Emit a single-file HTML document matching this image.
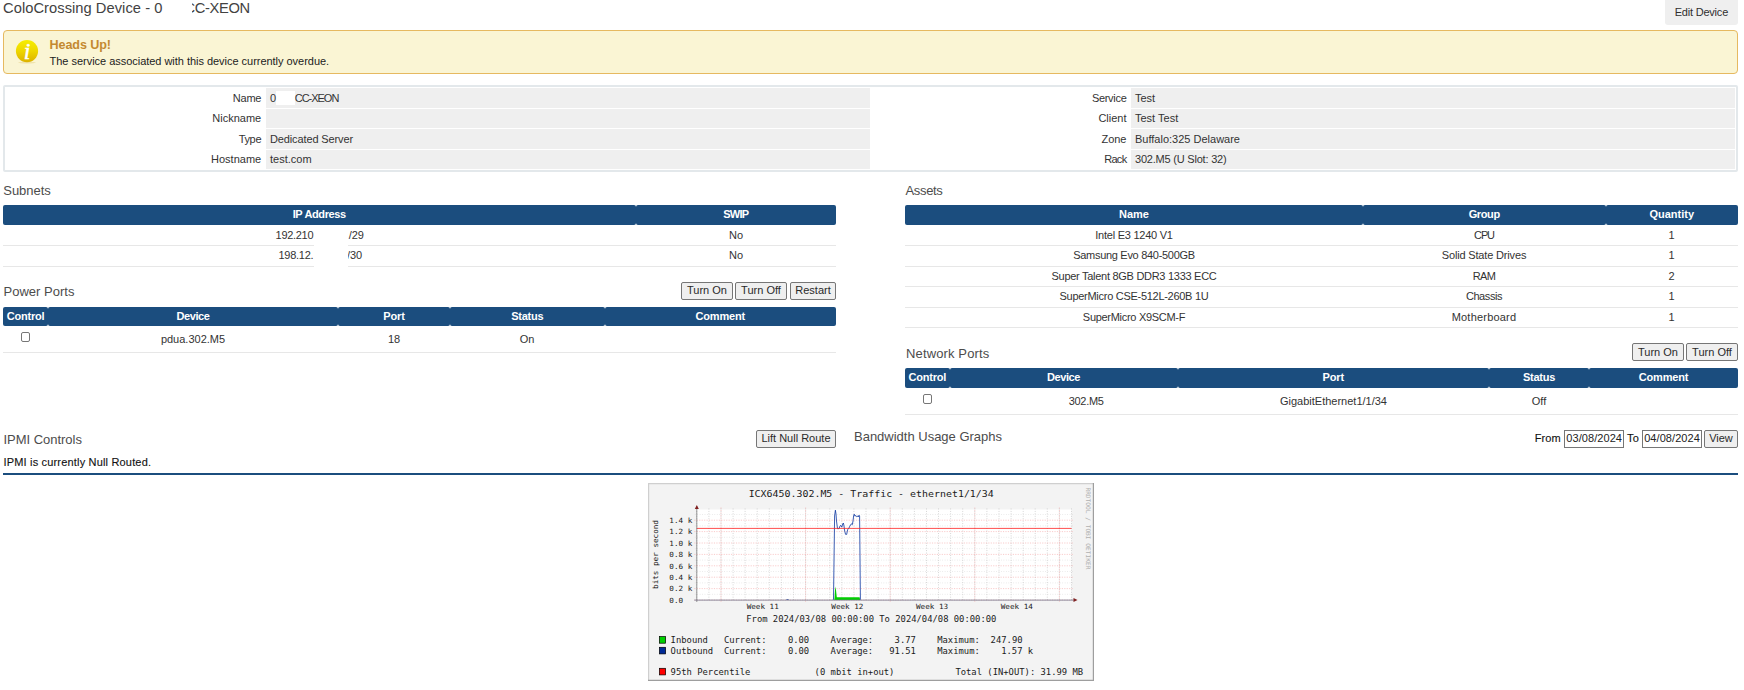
<!DOCTYPE html>
<html><head><meta charset="utf-8"><title>ColoCrossing Device</title>
<style>
html,body{margin:0;padding:0;background:#fff;}
body{width:1744px;height:690px;position:relative;overflow:hidden;font-family:"Liberation Sans",sans-serif;font-size:11px;color:#333;}
.a{position:absolute;white-space:nowrap;line-height:1;z-index:2;}
.bx{position:absolute;box-sizing:content-box;}
.th{position:absolute;background:#1b4d7e;border-radius:2px;}
.ln{position:absolute;height:1px;background:#e7e7e7;}
.gc{position:absolute;background:#efefef;}
.btn{position:absolute;box-sizing:border-box;border:1px solid #767676;background:#efefef;border-radius:2px;}
.cb{position:absolute;width:7.1px;height:7.3px;border:1px solid #767676;border-radius:2px;background:#fff;}
.inp{position:absolute;box-sizing:border-box;border:1px solid #767676;background:#fff;}
.wh{position:absolute;background:#fff;}
</style></head><body>
<div class="wh" style="left:166px;top:0;width:25.5px;height:18px;z-index:5"></div>
<div class="bx" style="left:1665px;top:0;width:73px;height:25px;background:#efefef;border-radius:0 0 3px 3px;"></div>
<div class="bx" style="left:3px;top:30px;width:1733px;height:42px;background:#faf5d4;border:1px solid #e6b960;border-radius:4px;"></div>
<svg class="bx" style="left:14px;top:38px;" width="26" height="28" viewBox="14 38 26 28">
<defs><linearGradient id="ig" x1="0" y1="0" x2="0" y2="1"><stop offset="0" stop-color="#f6ee00"/><stop offset="0.5" stop-color="#eed600"/><stop offset="1" stop-color="#ddb200"/></linearGradient></defs>
<ellipse cx="27" cy="62.6" rx="9" ry="0.9" fill="#e6d48a" opacity="0.55"/>
<circle cx="27" cy="51.1" r="11.1" fill="url(#ig)"/>
<text x="26.9" y="59" text-anchor="middle" font-family="Liberation Serif, serif" font-style="italic" font-size="23.5" fill="#fff" stroke="#fff" stroke-width="0.55">i</text>
</svg>
<div class="bx" style="left:3px;top:85px;width:1731px;height:82.6px;border:2px solid #e3e8eb;border-radius:2px;"></div>
<div class="gc" style="left:266px;top:88px;width:604px;height:19.5px;"></div>
<div class="gc" style="left:1131px;top:88px;width:604px;height:19.5px;"></div>
<div class="gc" style="left:266px;top:108.5px;width:604px;height:19.5px;"></div>
<div class="gc" style="left:1131px;top:108.5px;width:604px;height:19.5px;"></div>
<div class="gc" style="left:266px;top:129px;width:604px;height:19.5px;"></div>
<div class="gc" style="left:1131px;top:129px;width:604px;height:19.5px;"></div>
<div class="gc" style="left:266px;top:149.5px;width:604px;height:19.5px;"></div>
<div class="gc" style="left:1131px;top:149.5px;width:604px;height:19.5px;"></div>
<div class="wh" style="left:276px;top:91px;width:19px;height:14px;"></div>
<div class="th" style="left:3px;top:205px;width:632.5px;height:20px;"></div>
<div class="th" style="left:635.5px;top:205px;width:200.5px;height:20px;"></div>
<div class="ln" style="left:3px;top:245px;width:833px;"></div>
<div class="ln" style="left:3px;top:266px;width:833px;"></div>
<div class="wh" style="left:313.5px;top:226px;width:34.5px;height:42px;z-index:5"></div>
<div class="btn" style="left:681px;top:282px;width:52px;height:18px;"></div>
<div class="btn" style="left:735px;top:282px;width:52px;height:18px;"></div>
<div class="btn" style="left:790px;top:282px;width:46px;height:18px;"></div>
<div class="th" style="left:3px;top:307px;width:45px;height:19px;"></div>
<div class="th" style="left:48px;top:307px;width:290px;height:19px;"></div>
<div class="th" style="left:338px;top:307px;width:112px;height:19px;"></div>
<div class="th" style="left:450px;top:307px;width:154.5px;height:19px;"></div>
<div class="th" style="left:604.5px;top:307px;width:231.5px;height:19px;"></div>
<div class="cb" style="left:21px;top:332.3px;"></div>
<div class="ln" style="left:3px;top:352px;width:833px;"></div>
<div class="th" style="left:905px;top:205px;width:458px;height:20px;"></div>
<div class="th" style="left:1363px;top:205px;width:242.5px;height:20px;"></div>
<div class="th" style="left:1605.5px;top:205px;width:132.5px;height:20px;"></div>
<div class="ln" style="left:905px;top:245px;width:833px;"></div>
<div class="ln" style="left:905px;top:266px;width:833px;"></div>
<div class="ln" style="left:905px;top:286px;width:833px;"></div>
<div class="ln" style="left:905px;top:307px;width:833px;"></div>
<div class="ln" style="left:905px;top:327px;width:833px;"></div>
<div class="btn" style="left:1632px;top:343.3px;width:52px;height:18.19999999999999px;"></div>
<div class="btn" style="left:1686px;top:343.3px;width:52px;height:18.19999999999999px;"></div>
<div class="th" style="left:905px;top:368px;width:44.5px;height:20px;"></div>
<div class="th" style="left:949.5px;top:368px;width:228.0px;height:20px;"></div>
<div class="th" style="left:1177.5px;top:368px;width:311.5px;height:20px;"></div>
<div class="th" style="left:1489px;top:368px;width:100px;height:20px;"></div>
<div class="th" style="left:1589px;top:368px;width:149px;height:20px;"></div>
<div class="cb" style="left:923px;top:394.4px;"></div>
<div class="ln" style="left:905px;top:414px;width:833px;"></div>
<div class="btn" style="left:756px;top:430.3px;width:80px;height:17.30000000000001px;"></div>
<div class="inp" style="left:1564px;top:430.3px;width:60px;height:17.5px;"></div>
<div class="inp" style="left:1642px;top:430.3px;width:60px;height:17.5px;"></div>
<div class="btn" style="left:1704px;top:430.3px;width:34px;height:17.30000000000001px;"></div>
<div class="bx" style="left:3px;top:473px;width:1735px;height:2px;background:#1b4d7e;"></div>
<div class="a" style="left:3.10px;top:1.00px;font-size:14.7px;color:#424242;letter-spacing:0.041px;">ColoCrossing Device - 0</div>
<div class="a" style="left:184.40px;top:1.00px;font-size:14.7px;color:#424242;letter-spacing:-0.319px;">CC-XEON</div>
<div class="a" style="left:1674.75px;top:7.00px;font-size:11px;color:#2f2f2f;letter-spacing:-0.213px;">Edit Device</div>
<div class="a" style="left:49.60px;top:39.00px;font-size:12.6px;color:#c4892f;font-weight:bold;letter-spacing:-0.120px;">Heads Up!</div>
<div class="a" style="left:49.60px;top:56.00px;font-size:11px;color:#1c1c1c;letter-spacing:-0.030px;">The service associated with this device currently overdue.</div>
<div class="a" style="left:232.80px;top:93.00px;font-size:11px;color:#333;letter-spacing:-0.236px;">Name</div>
<div class="a" style="left:270.00px;top:93.00px;font-size:11px;color:#333;">0</div>
<div class="a" style="left:1091.90px;top:93.00px;font-size:11px;color:#333;letter-spacing:-0.298px;">Service</div>
<div class="a" style="left:1135.00px;top:93.00px;font-size:11px;color:#333;">Test</div>
<div class="a" style="left:212.29px;top:113.00px;font-size:11px;color:#333;">Nickname</div>
<div class="a" style="left:1098.38px;top:113.00px;font-size:11px;color:#333;">Client</div>
<div class="a" style="left:1135.00px;top:113.00px;font-size:11px;color:#333;">Test Test</div>
<div class="a" style="left:238.70px;top:134.00px;font-size:11px;color:#333;letter-spacing:-0.340px;">Type</div>
<div class="a" style="left:270.00px;top:134.00px;font-size:11px;color:#333;letter-spacing:-0.125px;">Dedicated Server</div>
<div class="a" style="left:1101.42px;top:134.00px;font-size:11px;color:#333;">Zone</div>
<div class="a" style="left:1135.00px;top:134.00px;font-size:11px;color:#333;">Buffalo:325 Delaware</div>
<div class="a" style="left:211.06px;top:154.00px;font-size:11px;color:#333;">Hostname</div>
<div class="a" style="left:270.00px;top:154.00px;font-size:11px;color:#333;">test.com</div>
<div class="a" style="left:1104.20px;top:154.00px;font-size:11px;color:#333;letter-spacing:-0.691px;">Rack</div>
<div class="a" style="left:1135.00px;top:154.00px;font-size:11px;color:#333;letter-spacing:-0.209px;">302.M5 (U Slot: 32)</div>
<div class="a" style="left:294.80px;top:93.00px;font-size:11px;color:#333;letter-spacing:-1.033px;">CC-XEON</div>
<div class="a" style="left:3.30px;top:184.00px;font-size:13px;color:#4c4c4c;letter-spacing:-0.043px;">Subnets</div>
<div class="a" style="left:292.70px;top:209.00px;font-size:11px;color:#fff;font-weight:bold;letter-spacing:-0.376px;">IP Address</div>
<div class="a" style="left:723.15px;top:209.00px;font-size:11px;color:#fff;font-weight:bold;letter-spacing:-0.731px;">SWIP</div>
<div class="a" style="left:275.60px;top:230.00px;font-size:11px;color:#333;letter-spacing:-0.309px;">192.210</div>
<div class="a" style="left:348.70px;top:230.00px;font-size:11px;color:#333;">/29</div>
<div class="a" style="left:278.50px;top:250.00px;font-size:11px;color:#333;letter-spacing:-0.272px;">198.12.</div>
<div class="a" style="left:346.90px;top:250.00px;font-size:11px;color:#333;">/30</div>
<div class="a" style="left:728.97px;top:230.00px;font-size:11px;color:#333;">No</div>
<div class="a" style="left:728.97px;top:250.00px;font-size:11px;color:#333;">No</div>
<div class="a" style="left:3.50px;top:285.00px;font-size:13px;color:#4c4c4c;letter-spacing:0.017px;">Power Ports</div>
<div class="a" style="left:687.02px;top:285.00px;font-size:11px;color:#2a2a2a;">Turn On</div>
<div class="a" style="left:741.12px;top:285.00px;font-size:11px;color:#2a2a2a;">Turn Off</div>
<div class="a" style="left:795.27px;top:285.00px;font-size:11px;color:#2a2a2a;">Restart</div>
<div class="a" style="left:6.65px;top:311.00px;font-size:11px;color:#fff;font-weight:bold;letter-spacing:-0.201px;">Control</div>
<div class="a" style="left:176.50px;top:311.00px;font-size:11px;color:#fff;font-weight:bold;letter-spacing:-0.414px;">Device</div>
<div class="a" style="left:383.30px;top:311.00px;font-size:11px;color:#fff;font-weight:bold;letter-spacing:-0.150px;">Port</div>
<div class="a" style="left:511.20px;top:311.00px;font-size:11px;color:#fff;font-weight:bold;letter-spacing:-0.254px;">Status</div>
<div class="a" style="left:695.40px;top:311.00px;font-size:11px;color:#fff;font-weight:bold;letter-spacing:-0.148px;">Comment</div>
<div class="a" style="left:160.89px;top:334.00px;font-size:11px;color:#333;">pdua.302.M5</div>
<div class="a" style="left:387.88px;top:334.00px;font-size:11px;color:#333;">18</div>
<div class="a" style="left:519.66px;top:334.00px;font-size:11px;color:#333;">On</div>
<div class="a" style="left:905.50px;top:184.00px;font-size:13px;color:#4c4c4c;letter-spacing:-0.336px;">Assets</div>
<div class="a" style="left:1119.00px;top:209.00px;font-size:11px;color:#fff;font-weight:bold;letter-spacing:0.008px;">Name</div>
<div class="a" style="left:1468.65px;top:209.00px;font-size:11px;color:#fff;font-weight:bold;letter-spacing:-0.360px;">Group</div>
<div class="a" style="left:1649.45px;top:209.00px;font-size:11px;color:#fff;font-weight:bold;letter-spacing:-0.003px;">Quantity</div>
<div class="a" style="left:1095.32px;top:230.00px;font-size:11px;color:#333;letter-spacing:-0.249px;">Intel E3 1240 V1</div>
<div class="a" style="left:1474.05px;top:230.00px;font-size:11px;color:#333;letter-spacing:-1.111px;">CPU</div>
<div class="a" style="left:1668.44px;top:230.00px;font-size:11px;color:#333;">1</div>
<div class="a" style="left:1073.23px;top:250.00px;font-size:11px;color:#333;letter-spacing:-0.298px;">Samsung Evo 840-500GB</div>
<div class="a" style="left:1441.75px;top:250.00px;font-size:11px;color:#333;letter-spacing:-0.163px;">Solid State Drives</div>
<div class="a" style="left:1668.44px;top:250.00px;font-size:11px;color:#333;">1</div>
<div class="a" style="left:1051.52px;top:271.00px;font-size:11px;color:#333;letter-spacing:-0.283px;">Super Talent 8GB DDR3 1333 ECC</div>
<div class="a" style="left:1472.80px;top:271.00px;font-size:11px;color:#333;letter-spacing:-0.684px;">RAM</div>
<div class="a" style="left:1668.44px;top:271.00px;font-size:11px;color:#333;">2</div>
<div class="a" style="left:1059.57px;top:291.00px;font-size:11px;color:#333;letter-spacing:-0.284px;">SuperMicro CSE-512L-260B 1U</div>
<div class="a" style="left:1465.90px;top:291.00px;font-size:11px;color:#333;letter-spacing:-0.418px;">Chassis</div>
<div class="a" style="left:1668.44px;top:291.00px;font-size:11px;color:#333;">1</div>
<div class="a" style="left:1082.85px;top:312.00px;font-size:11px;color:#333;letter-spacing:-0.293px;">SuperMicro X9SCM-F</div>
<div class="a" style="left:1451.70px;top:312.00px;font-size:11px;color:#333;letter-spacing:0.202px;">Motherboard</div>
<div class="a" style="left:1668.44px;top:312.00px;font-size:11px;color:#333;">1</div>
<div class="a" style="left:906.00px;top:347.00px;font-size:13px;color:#4c4c4c;letter-spacing:0.135px;">Network Ports</div>
<div class="a" style="left:1638.02px;top:347.00px;font-size:11px;color:#2a2a2a;">Turn On</div>
<div class="a" style="left:1692.12px;top:347.00px;font-size:11px;color:#2a2a2a;">Turn Off</div>
<div class="a" style="left:908.40px;top:372.00px;font-size:11px;color:#fff;font-weight:bold;letter-spacing:-0.201px;">Control</div>
<div class="a" style="left:1047.00px;top:372.00px;font-size:11px;color:#fff;font-weight:bold;letter-spacing:-0.414px;">Device</div>
<div class="a" style="left:1322.55px;top:372.00px;font-size:11px;color:#fff;font-weight:bold;letter-spacing:-0.150px;">Port</div>
<div class="a" style="left:1522.95px;top:372.00px;font-size:11px;color:#fff;font-weight:bold;letter-spacing:-0.254px;">Status</div>
<div class="a" style="left:1638.65px;top:372.00px;font-size:11px;color:#fff;font-weight:bold;letter-spacing:-0.148px;">Comment</div>
<div class="a" style="left:1068.70px;top:396.00px;font-size:11px;color:#333;letter-spacing:-0.284px;">302.M5</div>
<div class="a" style="left:1279.98px;top:396.00px;font-size:11px;color:#333;">GigabitEthernet1/1/34</div>
<div class="a" style="left:1531.76px;top:396.00px;font-size:11px;color:#333;">Off</div>
<div class="a" style="left:3.50px;top:433.00px;font-size:13px;color:#4c4c4c;letter-spacing:-0.027px;">IPMI Controls</div>
<div class="a" style="left:761.45px;top:433.00px;font-size:11px;color:#2a2a2a;">Lift Null Route</div>
<div class="a" style="left:3.50px;top:457.00px;font-size:11px;color:#111;letter-spacing:0.175px;-webkit-text-stroke:0.12px #151515;">IPMI is currently Null Routed.</div>
<div class="a" style="left:854.00px;top:430.00px;font-size:13px;color:#4c4c4c;letter-spacing:-0.007px;">Bandwidth Usage Graphs</div>
<div class="a" style="left:1534.75px;top:433.00px;font-size:11px;color:#111;letter-spacing:0.082px;-webkit-text-stroke:0.12px #151515;">From</div>
<div class="a" style="left:1566.30px;top:433.00px;font-size:11px;color:#222;letter-spacing:0.064px;">03/08/2024</div>
<div class="a" style="left:1627.00px;top:433.00px;font-size:11px;color:#111;letter-spacing:0.138px;-webkit-text-stroke:0.12px #151515;">To</div>
<div class="a" style="left:1644.20px;top:433.00px;font-size:11px;color:#222;letter-spacing:0.064px;">04/08/2024</div>
<div class="a" style="left:1709.17px;top:433.00px;font-size:11px;color:#2a2a2a;">View</div>
<svg class="bx" style="left:648px;top:483px;z-index:1" width="446" height="198" viewBox="648 483 446 198" font-family="DejaVu Sans Mono, Liberation Mono, monospace">
<rect x="648" y="483" width="446" height="198" fill="#f3f3f3"/>
<path d="M648 681 V483 H1094" fill="none" stroke="#cfcfcf" stroke-width="2.4"/>
<path d="M1094 483 V681 H648" fill="none" stroke="#9e9e9e" stroke-width="2.4"/>
<rect x="696.8" y="509.5" width="374.70000000000005" height="90.5" fill="#fff"/>
<path d="M696.8 508.5 V601.0 M708.9 508.5 V601.0 M721.0 508.5 V601.0 M733.1 508.5 V601.0 M745.1 508.5 V601.0 M757.2 508.5 V601.0 M769.3 508.5 V601.0 M781.4 508.5 V601.0 M793.5 508.5 V601.0 M805.6 508.5 V601.0 M817.7 508.5 V601.0 M829.8 508.5 V601.0 M841.8 508.5 V601.0 M853.9 508.5 V601.0 M866.0 508.5 V601.0 M878.1 508.5 V601.0 M890.2 508.5 V601.0 M902.3 508.5 V601.0 M914.4 508.5 V601.0 M926.5 508.5 V601.0 M938.5 508.5 V601.0 M950.6 508.5 V601.0 M962.7 508.5 V601.0 M974.8 508.5 V601.0 M986.9 508.5 V601.0 M999.0 508.5 V601.0 M1011.1 508.5 V601.0 M1023.2 508.5 V601.0 M1035.2 508.5 V601.0 M1047.3 508.5 V601.0 M1059.4 508.5 V601.0 M1071.5 508.5 V601.0" stroke="#b4b4b4" stroke-width="0.6" stroke-dasharray="0.9 1.55" fill="none"/>
<path d="M694.8 594.3 H1073.5 M694.8 582.9 H1073.5 M694.8 571.5 H1073.5 M694.8 560.1 H1073.5 M694.8 548.7 H1073.5 M694.8 537.3 H1073.5 M694.8 525.9 H1073.5 M694.8 514.5 H1073.5" stroke="#cfcfcf" stroke-width="0.5" stroke-dasharray="0.8 1.65" fill="none"/>
<path d="M694.3 600.0 H1074.0 M694.3 588.6 H1074.0 M694.3 577.2 H1074.0 M694.3 565.8 H1074.0 M694.3 554.4 H1074.0 M694.3 543.0 H1074.0 M694.3 531.6 H1074.0 M694.3 520.2 H1074.0" stroke="#f4a0a0" stroke-width="0.55" stroke-dasharray="1.15 1.3" fill="none"/>
<path d="M721.0 507.5 V602.5 M805.6 507.5 V602.5 M890.2 507.5 V602.5 M974.8 507.5 V602.5 M1059.4 507.5 V602.5" stroke="#f4a0a0" stroke-width="0.55" stroke-dasharray="1.15 1.3" fill="none"/>
<path d="M834.3 600 L834.6 597 L835.2 586.6 L836 590 L836.8 597.3 L859.6 597.3 L860.2 600 Z" fill="#00cf00"/>
<path d="M786.5 600 L787.5 599 L788.5 600" stroke="#002a97" stroke-width="0.8" fill="none"/>
<polyline points="833.2,600 833.5,599 834.6,516 835.4,510.2 836.0,514 836.5,521 837.5,528.7 839.1,528.6 840.0,526 840.7,525.3 841.8,527.2 842.6,524 843.4,523 844.0,526 844.5,530 845.5,534.3 846.7,534.4 847.3,531 847.8,529.4 849.0,528 849.8,526.2 851.4,523.8 852.3,524.7 853.0,521 853.6,516 854.2,514.2 855.0,516.2 855.8,515.5 856.6,516.6 857.4,516 858.2,517 859.0,515.2 859.6,516 860.4,599.5 860.6,600" fill="none" stroke="#0a35a0" stroke-width="0.8" stroke-linejoin="round"/>
<path d="M696.8 528.4 H1071.5" stroke="#ff2020" stroke-width="0.8" fill="none"/>
<path d="M696.8 602.0 V506.5" stroke="#555" stroke-width="0.6" fill="none"/>
<path d="M694.3 600.1 H1074.5" stroke="#707088" stroke-width="0.8" fill="none"/>
<path d="M694.8 509.0 L696.8 505.0 L698.8 509.0 Z" fill="#802020"/>
<path d="M1073.5 598.0 L1077.5 600.0 L1073.5 602.0 Z" fill="#802020"/>
<text transform="translate(871.2 497.0) scale(1.1180 1)" font-size="8.9" text-anchor="middle" fill="#1a1a1a" xml:space="preserve">ICX6450.302.M5 - Traffic - ethernet1/1/34</text>
<text transform="translate(669.3 602.7) scale(1.0613 1)" font-size="7.2" text-anchor="start" fill="#1a1a1a" xml:space="preserve">0.0</text>
<text transform="translate(669.3 591.3000000000001) scale(1.0613 1)" font-size="7.2" text-anchor="start" fill="#1a1a1a" xml:space="preserve">0.2 k</text>
<text transform="translate(669.3 579.9000000000001) scale(1.0613 1)" font-size="7.2" text-anchor="start" fill="#1a1a1a" xml:space="preserve">0.4 k</text>
<text transform="translate(669.3 568.5) scale(1.0613 1)" font-size="7.2" text-anchor="start" fill="#1a1a1a" xml:space="preserve">0.6 k</text>
<text transform="translate(669.3 557.1) scale(1.0613 1)" font-size="7.2" text-anchor="start" fill="#1a1a1a" xml:space="preserve">0.8 k</text>
<text transform="translate(669.3 545.7) scale(1.0613 1)" font-size="7.2" text-anchor="start" fill="#1a1a1a" xml:space="preserve">1.0 k</text>
<text transform="translate(669.3 534.3000000000001) scale(1.0613 1)" font-size="7.2" text-anchor="start" fill="#1a1a1a" xml:space="preserve">1.2 k</text>
<text transform="translate(669.3 522.9000000000001) scale(1.0613 1)" font-size="7.2" text-anchor="start" fill="#1a1a1a" xml:space="preserve">1.4 k</text>
<text transform="translate(762.7 608.7) scale(1.0613 1)" font-size="7.2" text-anchor="middle" fill="#1a1a1a" xml:space="preserve">Week 11</text>
<text transform="translate(847.4000000000001 608.7) scale(1.0613 1)" font-size="7.2" text-anchor="middle" fill="#1a1a1a" xml:space="preserve">Week 12</text>
<text transform="translate(932.1 608.7) scale(1.0613 1)" font-size="7.2" text-anchor="middle" fill="#1a1a1a" xml:space="preserve">Week 13</text>
<text transform="translate(1016.8000000000001 608.7) scale(1.0613 1)" font-size="7.2" text-anchor="middle" fill="#1a1a1a" xml:space="preserve">Week 14</text>
<text transform="translate(871.3 621.8) scale(1.0937 1)" font-size="8.1" text-anchor="middle" fill="#1a1a1a" xml:space="preserve">From 2024/03/08 00:00:00 To 2024/04/08 00:00:00</text>
<text transform="translate(658.0 554.5) rotate(-90) scale(1.0613 1)" font-size="7.2" text-anchor="middle" fill="#1a1a1a">bits per second</text>
<text transform="translate(1085.6 528.4) rotate(90)" font-size="6.2" text-anchor="middle" fill="#b0b0b0">RRDTOOL / TOBI OETIKER</text>
<rect x="659.4" y="636.6" width="6.2" height="6.6" fill="#00cf00" stroke="#000" stroke-width="0.7"/>
<rect x="659.4" y="647.3" width="6.2" height="6.6" fill="#002a97" stroke="#000" stroke-width="0.7"/>
<rect x="659.4" y="668.3" width="6.2" height="6.6" fill="#ff0000" stroke="#000" stroke-width="0.7"/>
<text transform="translate(670.6 642.9) scale(1.0937 1)" font-size="8.1" text-anchor="start" fill="#1a1a1a" xml:space="preserve">Inbound</text>
<text transform="translate(723.9 642.9) scale(1.0937 1)" font-size="8.1" text-anchor="start" fill="#1a1a1a" xml:space="preserve">Current:</text>
<text transform="translate(787.9 642.9) scale(1.0937 1)" font-size="8.1" text-anchor="start" fill="#1a1a1a" xml:space="preserve">0.00</text>
<text transform="translate(830.6 642.9) scale(1.0937 1)" font-size="8.1" text-anchor="start" fill="#1a1a1a" xml:space="preserve">Average:</text>
<text transform="translate(894.6 642.9) scale(1.0937 1)" font-size="8.1" text-anchor="start" fill="#1a1a1a" xml:space="preserve">3.77</text>
<text transform="translate(937.2 642.9) scale(1.0937 1)" font-size="8.1" text-anchor="start" fill="#1a1a1a" xml:space="preserve">Maximum:</text>
<text transform="translate(990.6 642.9) scale(1.0937 1)" font-size="8.1" text-anchor="start" fill="#1a1a1a" xml:space="preserve">247.90</text>
<text transform="translate(670.6 653.5) scale(1.0937 1)" font-size="8.1" text-anchor="start" fill="#1a1a1a" xml:space="preserve">Outbound</text>
<text transform="translate(723.9 653.5) scale(1.0937 1)" font-size="8.1" text-anchor="start" fill="#1a1a1a" xml:space="preserve">Current:</text>
<text transform="translate(787.9 653.5) scale(1.0937 1)" font-size="8.1" text-anchor="start" fill="#1a1a1a" xml:space="preserve">0.00</text>
<text transform="translate(830.6 653.5) scale(1.0937 1)" font-size="8.1" text-anchor="start" fill="#1a1a1a" xml:space="preserve">Average:</text>
<text transform="translate(889.3 653.5) scale(1.0937 1)" font-size="8.1" text-anchor="start" fill="#1a1a1a" xml:space="preserve">91.51</text>
<text transform="translate(937.2 653.5) scale(1.0937 1)" font-size="8.1" text-anchor="start" fill="#1a1a1a" xml:space="preserve">Maximum:</text>
<text transform="translate(1001.2 653.5) scale(1.0937 1)" font-size="8.1" text-anchor="start" fill="#1a1a1a" xml:space="preserve">1.57 k</text>
<text transform="translate(670.6 674.6) scale(1.0937 1)" font-size="8.1" text-anchor="start" fill="#1a1a1a" xml:space="preserve">95th Percentile</text>
<text transform="translate(814.6 674.6) scale(1.0937 1)" font-size="8.1" text-anchor="start" fill="#1a1a1a" xml:space="preserve">(0 mbit in+out)</text>
<text transform="translate(955.4 674.6) scale(1.0937 1)" font-size="8.1" text-anchor="start" fill="#1a1a1a" xml:space="preserve">Total (IN+OUT): 31.99 MB</text>
</svg>
</body></html>
